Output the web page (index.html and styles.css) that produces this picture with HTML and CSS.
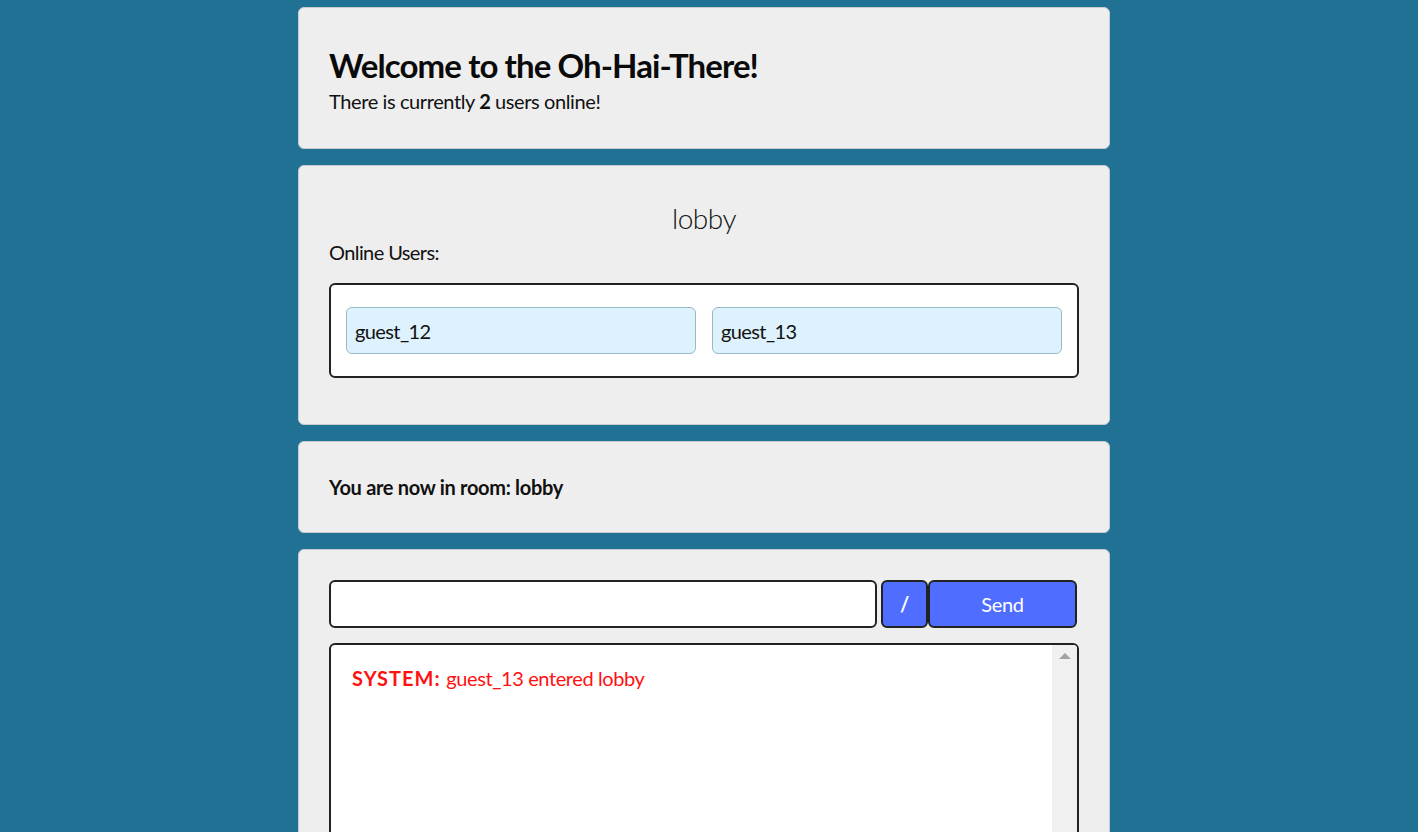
FILE: index.html
```html
<!DOCTYPE html>
<html>
<head>
<meta charset="utf-8">
<link rel="stylesheet" href="styles.css">
</head>
<body>
<main class="page">
  <section class="card card-welcome">
    <h1 class="title">Welcome to the Oh-Hai-There!</h1>
    <p class="subtitle">There is currently <b>2</b> users online!</p>
  </section>

  <section class="card card-room">
    <h2 class="room-name">lobby</h2>
    <p class="label">Online Users:</p>
    <div class="users">
      <div class="user">guest_12</div>
      <div class="user">guest_13</div>
    </div>
  </section>

  <section class="card card-status">
    <p class="status">You are now in room: lobby</p>
  </section>

  <section class="card card-chat">
    <div class="composer">
      <input class="msg-input" type="text">
      <button class="btn btn-slash">/</button>
      <button class="btn btn-send">Send</button>
    </div>
    <div class="messages">
      <div class="messages-list">
        <p class="msg"><span class="msg-sys">SYSTEM:</span> guest_13 entered lobby</p>
      </div>
      <div class="scrollbar"><span class="arrow-up"></span></div>
    </div>
  </section>
</main>
</body>
</html>
```

FILE: styles.css
```css
* { box-sizing: border-box; }
html, body {
  margin: 0;
  padding: 0;
  height: 100%;
  overflow: hidden;
}
body {
  background: #217195;
  font-family: Lato, "Open Sans", sans-serif;
  color: #111;
  padding-right: 10px;
}
.page {
  width: 812px;
  margin: 0 auto;
  padding-top: 7px;
  display: flex;
  flex-direction: column;
  gap: 16px;
}
.card {
  background: #eeeeee;
  border: 1px solid #c8cbcd;
  border-radius: 6px;
  padding: 0 30px;
}
.card-welcome {
  height: 142px;
  padding-top: 34px;
}
.title {
  margin: 0;
  font-size: 33px;
  letter-spacing: -0.9px;
  line-height: 46px;
  font-weight: bold;
  color: #0a0a0a;
}
.subtitle {
  margin: 0;
  font-size: 20px;
  letter-spacing: -0.4px;
  line-height: 26px;
}
.card-room {
  height: 260px;
  padding-top: 34px;
}
.room-name {
  margin: 0;
  text-align: center;
  font-weight: 300;
  font-size: 28px;
  letter-spacing: -0.5px;
  line-height: 36px;
}
.label {
  margin: 2px 0 0;
  font-size: 20px;
  letter-spacing: -0.6px;
  line-height: 28px;
}
.users {
  margin-top: 17px;
  height: 95px;
  background: #fff;
  border: 2px solid #222;
  border-radius: 6px;
  padding: 22px 15px;
  display: flex;
  gap: 16px;
}
.user {
  flex: 1;
  height: 47px;
  background: #ddf2fd;
  border: 1px solid #98b9c8;
  border-radius: 6px;
  padding-left: 8px;
  font-size: 20px;
  letter-spacing: -0.6px;
  line-height: 47px;
}
.card-status {
  height: 92px;
  display: flex;
  align-items: center;
}
.status {
  margin: 0;
  font-size: 20px;
  letter-spacing: -0.3px;
  font-weight: bold;
}
.card-chat {
  height: 300px;
  padding-top: 30px;
}
.composer {
  display: flex;
  height: 48px;
}
.msg-input {
  width: 548px;
  height: 48px;
  border: 2px solid #222;
  border-radius: 6px;
  background: #fff;
  margin: 0 4px 0 0;
  padding: 0 8px;
}
.btn {
  height: 48px;
  background: #4f6dff;
  border: 2px solid #222;
  border-radius: 6px;
  color: #fff;
  font-family: inherit;
  font-size: 20px;
  letter-spacing: -0.3px;
  padding: 0;
  margin: 0;
}
.btn-slash {
  width: 47px;
  font-weight: bold;
}
.btn-send {
  width: 149px;
}
.messages {
  margin-top: 15px;
  width: 750px;
  height: 260px;
  background: #fff;
  border: 2px solid #222;
  border-radius: 6px 6px 0 0;
  display: flex;
  overflow: hidden;
}
.messages-list {
  flex: 1;
  padding: 21px 21px;
}
.msg {
  margin: 0;
  color: #ff1111;
  font-size: 20px;
  letter-spacing: -0.4px;
}
.msg-sys {
  font-weight: bold;
  letter-spacing: 1px;
  margin-right: 1px;
}
.scrollbar {
  width: 25px;
  background: #f0f0f0;
  display: flex;
  justify-content: center;
  padding-top: 8px;
}
.arrow-up {
  width: 0;
  height: 0;
  border-left: 6px solid transparent;
  border-right: 6px solid transparent;
  border-bottom: 6px solid #a3a3a3;
}
```
